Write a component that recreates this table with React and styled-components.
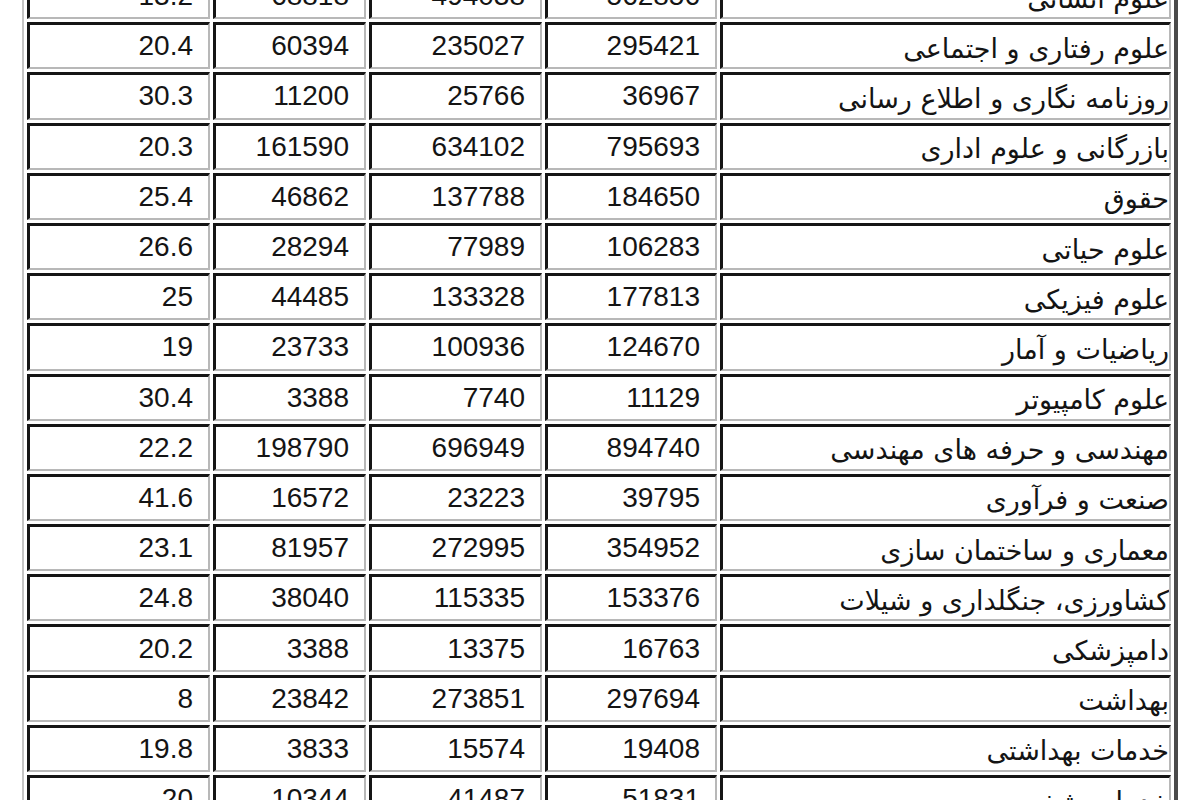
import styled, { createGlobalStyle } from 'styled-components';

const GlobalStyle = createGlobalStyle`
    html, body {
        margin: 0;
        padding: 0;
        background: #fff;
        overflow: hidden;
    }
`;

const Page = styled.div`
    width: 1200px;
    height: 800px;
    overflow: hidden;
    padding-left: 22px;
    box-sizing: border-box;
`;

const Table = styled.table`
    margin-top: -33px;
    width: 1156px;
    table-layout: fixed;
    border-collapse: separate;
    border-spacing: 3px 3px;
    border-style: solid;
    border-width: 2px 4px 3px 2px;
    border-color: #c4c4c4 #4a4a4a #4a4a4a #c4c4c4;
    background: #fff;
`;

const Cell = styled.td`
    box-sizing: border-box;
    width: ${p => p.$w}px;
    height: 47.2px;
    padding: ${p => (p.$name ? '4px 0 0 0' : '0 15px 0 0')};
    text-align: right;
    vertical-align: middle;
    border-style: solid;
    border-width: 3px 2px 2px 3px;
    border-color: #151515 #b8b8b8 #b8b8b8 #151515;
    color: #141414;
    white-space: nowrap;
    overflow: hidden;
    font-family: ${p => (p.$name ? '"DejaVu Sans", sans-serif' : '"Liberation Sans", Arial, sans-serif')};
    font-size: ${p => (p.$name ? 27 : 28)}px;
    line-height: 1;
`;

const rows = [
    ['علوم انسانی', '562856', '494038', '68818', '13.2'],
    ['علوم رفتاری و اجتماعی', '295421', '235027', '60394', '20.4'],
    ['روزنامه نگاری و اطلاع رسانی', '36967', '25766', '11200', '30.3'],
    ['بازرگانی و علوم اداری', '795693', '634102', '161590', '20.3'],
    ['حقوق', '184650', '137788', '46862', '25.4'],
    ['علوم حیاتی', '106283', '77989', '28294', '26.6'],
    ['علوم فیزیکی', '177813', '133328', '44485', '25'],
    ['ریاضیات و آمار', '124670', '100936', '23733', '19'],
    ['علوم کامپیوتر', '11129', '7740', '3388', '30.4'],
    ['مهندسی و حرفه های مهندسی', '894740', '696949', '198790', '22.2'],
    ['صنعت و فرآوری', '39795', '23223', '16572', '41.6'],
    ['معماری و ساختمان سازی', '354952', '272995', '81957', '23.1'],
    ['کشاورزی، جنگلداری و شیلات', '153376', '115335', '38040', '24.8'],
    ['دامپزشکی', '16763', '13375', '3388', '20.2'],
    ['بهداشت', '297694', '273851', '23842', '8'],
    ['خدمات بهداشتی', '19408', '15574', '3833', '19.8'],
    ['خدمات شخصی', '51831', '41487', '10344', '20'],
];

// widths in rtl order: name, total, col3, col2, percent
const widths = [451, 172, 173, 153, 183];

export default function App() {
    return (
        <Page>
            <GlobalStyle />
            <Table dir="rtl">
                <tbody>
                    {rows.map((r, i) => (
                        <tr key={i}>
                            {r.map((v, j) => (
                                <Cell key={j} $w={widths[j]} $name={j === 0}>{v}</Cell>
                            ))}
                        </tr>
                    ))}
                </tbody>
            </Table>
        </Page>
    );
}
